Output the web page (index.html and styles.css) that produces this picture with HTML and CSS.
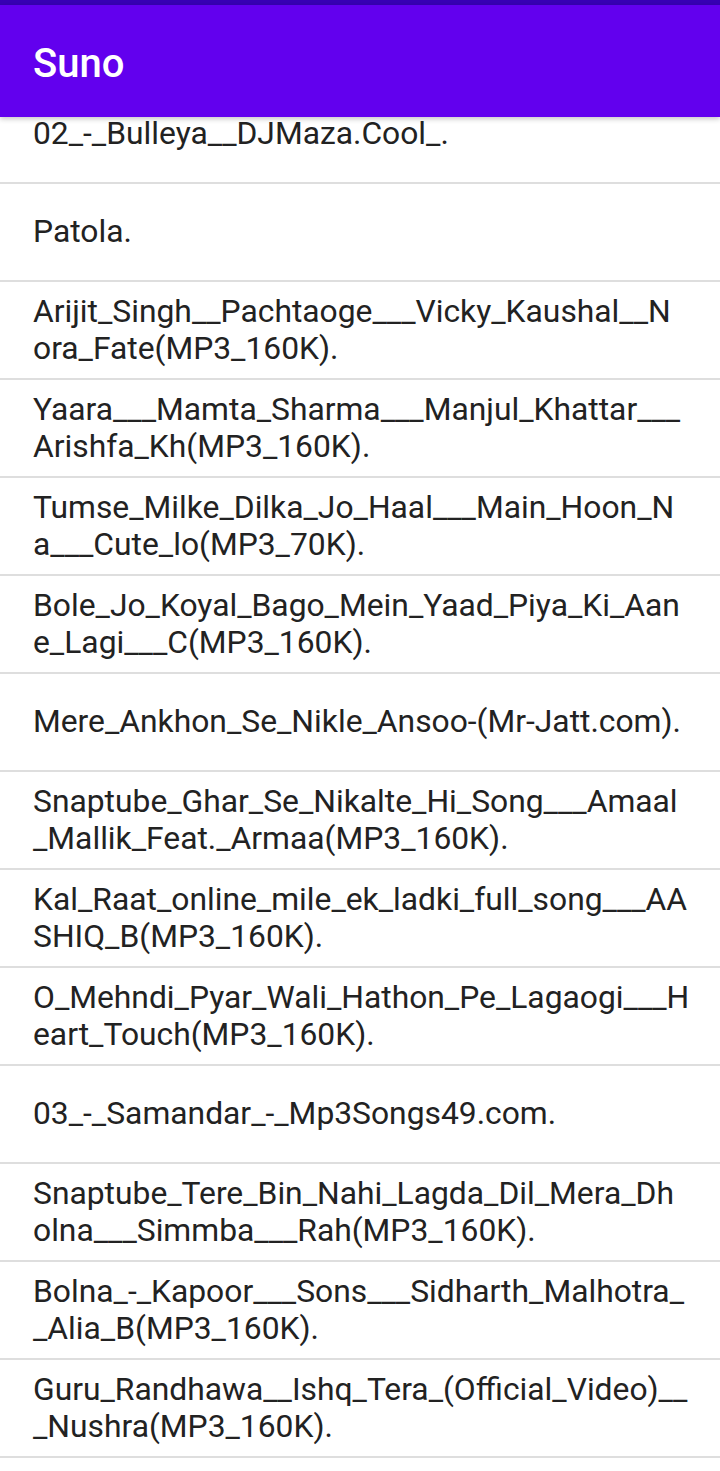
FILE: index.html
```html
<!DOCTYPE html>
<html>
<head>
<meta charset="utf-8">
<link rel="stylesheet" href="styles.css">
</head>
<body>
<div class="screen">
  <div class="status"></div>
  <header class="appbar"><h1 class="title">Suno</h1></header>
  <div class="viewport">
    <ul class="list">
      <li class="row">02_-_Bulleya__DJMaza.Cool_.</li>
      <li class="row">Patola.</li>
      <li class="row">Arijit_Singh__Pachtaoge___Vicky_Kaushal__N<br>ora_Fate(MP3_160K).</li>
      <li class="row">Yaara___Mamta_Sharma___Manjul_Khattar___<br>Arishfa_Kh(MP3_160K).</li>
      <li class="row">Tumse_Milke_Dilka_Jo_Haal___Main_Hoon_N<br>a___Cute_lo(MP3_70K).</li>
      <li class="row">Bole_Jo_Koyal_Bago_Mein_Yaad_Piya_Ki_Aan<br>e_Lagi___C(MP3_160K).</li>
      <li class="row">Mere_Ankhon_Se_Nikle_Ansoo-(Mr-Jatt.com).</li>
      <li class="row">Snaptube_Ghar_Se_Nikalte_Hi_Song___Amaal<br>_Mallik_Feat._Armaa(MP3_160K).</li>
      <li class="row">Kal_Raat_online_mile_ek_ladki_full_song___AA<br>SHIQ_B(MP3_160K).</li>
      <li class="row">O_Mehndi_Pyar_Wali_Hathon_Pe_Lagaogi___H<br>eart_Touch(MP3_160K).</li>
      <li class="row">03_-_Samandar_-_Mp3Songs49.com.</li>
      <li class="row">Snaptube_Tere_Bin_Nahi_Lagda_Dil_Mera_Dh<br>olna___Simmba___Rah(MP3_160K).</li>
      <li class="row">Bolna_-_Kapoor___Sons___Sidharth_Malhotra_<br>_Alia_B(MP3_160K).</li>
      <li class="row">Guru_Randhawa__Ishq_Tera_(Official_Video)__<br>_Nushra(MP3_160K).</li>
    </ul>
  </div>
</div>
</body>
</html>
```

FILE: styles.css
```css
html, body {
  margin: 0;
  padding: 0;
  background: #ffffff;
}
body {
  font-family: Roboto, "Liberation Sans", sans-serif;
}
.screen {
  width: 720px;
  height: 1471px;
  display: flex;
  flex-direction: column;
  overflow: hidden;
}
.status {
  height: 5px;
  background: #3700b3;
  flex: none;
}
.appbar {
  height: 112px;
  background: #6200ee;
  flex: none;
  display: flex;
  align-items: center;
  padding-left: 33px;
  position: relative;
  z-index: 2;
  box-shadow: 0 2px 5px rgba(0, 0, 0, 0.22);
}
.title {
  margin: 0;
  color: #ffffff;
  font-size: 40px;
  font-weight: 500;
  line-height: 1;
  padding-top: 6px;
}
.viewport {
  flex: 1;
  overflow: hidden;
}
.list {
  list-style: none;
  margin: -31px 0 0 0;
  padding: 0;
}
.row {
  box-sizing: border-box;
  min-height: 98px;
  border-bottom: 2px solid #dedede;
  display: flex;
  flex-direction: column;
  justify-content: center;
  padding: 10px 0 10px 33px;
  font-size: 31.8px;
  line-height: 37.5px;
  color: #222222;
  white-space: nowrap;
}
```
